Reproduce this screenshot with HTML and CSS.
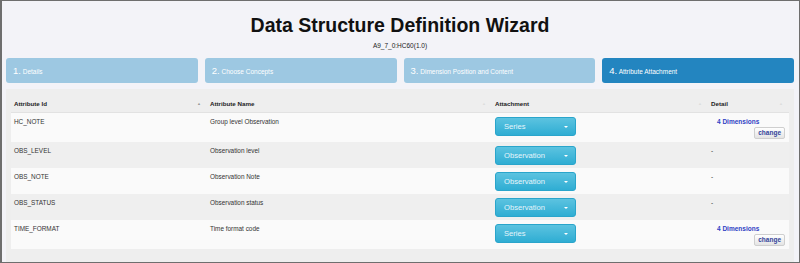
FILE: index.html
```html
<!DOCTYPE html>
<html>
  <head>
    <meta charset="utf-8" />
    <title>Data Structure Definition Wizard</title>
    <link rel="stylesheet" href="styles.css">
  </head>
  <body>
    <div id="wizard">
      <h1 class="title">Data Structure Definition Wizard</h1>
      <div class="subtitle">A9_7_0:HC60(1.0)</div>

      <div class="steps">
        <div class="step"><span class="num">1.</span> Details</div>
        <div class="step"><span class="num">2.</span> Choose Concepts</div>
        <div class="step"><span class="num">3.</span> Dimension Position and Content</div>
        <div class="step active"><span class="num">4.</span> Attribute Attachment</div>
      </div>

      <div class="panel">
        <table class="grid">
          <colgroup>
            <col class="c-id" />
            <col class="c-name" />
            <col class="c-att" />
            <col class="c-det" />
          </colgroup>
          <thead>
            <tr>
              <th>Attribute Id<span class="sort on">&#9650;</span></th>
              <th>Attribute Name<span class="sort">&#9650;</span></th>
              <th>Attachment<span class="sort">&#9650;</span></th>
              <th>Detail<span class="sort">&#9650;</span></th>
            </tr>
          </thead>
          <tbody>
            <tr class="odd">
              <td>HC_NOTE</td>
              <td>Group level Observation</td>
              <td><div class="drop">Series<span class="caret"></span></div></td>
              <td>
                <div class="detail">
                  <a class="dims">4 Dimensions</a>
                  <button class="change">change</button>
                </div>
              </td>
            </tr>
            <tr class="even">
              <td>OBS_LEVEL</td>
              <td>Observation level</td>
              <td><div class="drop">Observation<span class="caret"></span></div></td>
              <td>-</td>
            </tr>
            <tr class="odd">
              <td>OBS_NOTE</td>
              <td>Observation Note</td>
              <td><div class="drop">Observation<span class="caret"></span></div></td>
              <td>-</td>
            </tr>
            <tr class="even">
              <td>OBS_STATUS</td>
              <td>Observation status</td>
              <td><div class="drop">Observation<span class="caret"></span></div></td>
              <td>-</td>
            </tr>
            <tr class="odd">
              <td>TIME_FORMAT</td>
              <td>Time format code</td>
              <td><div class="drop">Series<span class="caret"></span></div></td>
              <td>
                <div class="detail">
                  <a class="dims">4 Dimensions</a>
                  <button class="change">change</button>
                </div>
              </td>
            </tr>
          </tbody>
        </table>
      </div>
    </div>
  </body>
</html>
```

FILE: styles.css
```css
html,
body {
  margin: 0;
  padding: 0;
}
body {
  font-family: "Liberation Sans", Arial, sans-serif;
  color: #333;
}
#wizard {
  box-sizing: border-box;
  width: 800px;
  height: 263px;
  border: 1px solid #6e6e6e;
  border-left-width: 2px;
  padding: 0 5px 0 4px;
  background: #f3f3f8;
  overflow: hidden;
}
.title {
  margin: 0;
  padding-top: 12px;
  font-size: 19.5px;
  line-height: 24px;
  font-weight: bold;
  color: #111;
  text-align: center;
}
.subtitle {
  margin-top: 4px;
  font-size: 6.5px;
  line-height: 10px;
  color: #222;
  text-align: center;
}
.steps {
  display: flex;
  gap: 7px;
  margin-top: 7px;
}
.step {
  flex: 1;
  height: 25px;
  line-height: 25px;
  padding-left: 7px;
  border-radius: 3px;
  background: #9dc8e2;
  color: #fff;
  font-size: 6.5px;
}
.step .num {
  font-size: 9.5px;
}
.step.active {
  background: #2385c0;
}
.panel {
  margin-top: 6px;
  height: 200px;
  padding: 7px 5px 0;
  background: #eeeeee;
}
.grid {
  width: 100%;
  border-collapse: collapse;
  table-layout: fixed;
}
.c-id {
  width: 196px;
}
.c-name {
  width: 285px;
}
.c-att {
  width: 216px;
}
.grid th {
  padding: 3px 3px 3px;
  font-size: 6.2px;
  line-height: 10px;
  font-weight: bold;
  color: #222;
  text-align: left;
  vertical-align: top;
  border-bottom: 1px solid #e2e2e2;
}
.sort {
  float: right;
  margin-right: 3px;
  font-size: 4px;
  color: #ddd;
}
.sort.on {
  color: #999;
}
.grid td {
  padding: 4px 3px 3px;
  font-size: 6.4px;
  line-height: 10px;
  color: #333;
  vertical-align: top;
}
.odd td {
  background: #fafafa;
  height: 19px;
}
.even td {
  background: #efefef;
  height: 19px;
}
.drop {
  position: relative;
  box-sizing: border-box;
  width: 81px;
  height: 19px;
  padding-left: 8px;
  line-height: 18px;
  font-size: 7.6px;
  color: #e6f5fb;
  border: 1px solid #2aa5cb;
  border-radius: 3px;
  background: linear-gradient(#5cc3e0, #2fadd3);
}
.caret {
  position: absolute;
  right: 7px;
  top: 8px;
  width: 0;
  height: 0;
  border-left: 2px solid transparent;
  border-right: 2px solid transparent;
  border-top: 2px solid #fff;
}
.detail {
  display: flex;
  flex-direction: column;
  align-items: flex-end;
}
.dims {
  align-self: flex-start;
  margin-left: 6px;
  font-size: 6.5px;
  font-weight: bold;
  color: #2f3fc4;
}
.change {
  margin: 0 1px 0 0;
  height: 12px;
  padding: 0 3px;
  font-family: "Liberation Sans", Arial, sans-serif;
  font-size: 6.5px;
  font-weight: bold;
  line-height: 10px;
  color: #33449a;
  border: 1px solid #cfcfcf;
  border-radius: 2px;
  background: linear-gradient(#ffffff, #e4e4e4);
}
```
